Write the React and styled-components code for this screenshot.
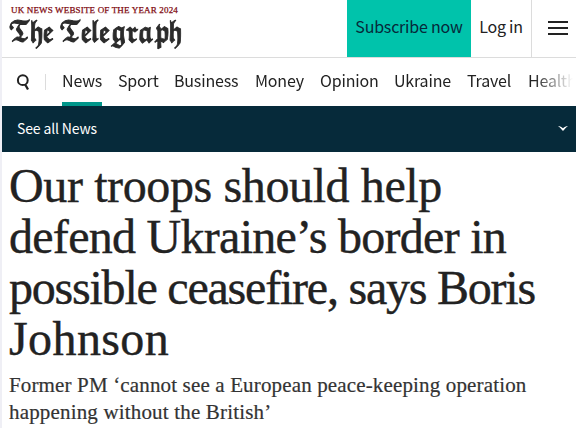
import React from 'react';
import styled, { createGlobalStyle } from 'styled-components';

const sans = '"Noto Sans CJK SC", "Noto Sans", sans-serif';
const serif = '"Liberation Serif", "Times New Roman", serif';

const GlobalStyle = createGlobalStyle`
  * { box-sizing: border-box; }
  body { margin: 0; background: #fff; overflow: hidden; }
`;

const Page = styled.div`
  height: 428px;
  overflow: hidden;
  border-left: 2px solid #efeff5;
  background: #fff;
  color: #222;
  font-family: ${sans};
`;

const Header = styled.header`
  display: flex;
  height: 58px;
  border-bottom: 1px solid #dcdcdc;
`;

const Brand = styled.div`
  flex: 1;
  padding: 5px 0 0 7px;
  min-width: 0;
`;

const Tagline = styled.p`
  margin: 0 0 0 2px;
  font: 9px/10px ${serif};
  letter-spacing: 0.16px;
  color: #7f0c12;
  -webkit-text-stroke: 0.25px #7f0c12;
  white-space: nowrap;
`;

const Wordmark = styled.div`
  width: 260px;
  height: 34px;
  margin: 2px 0 0 -1px;
  font: 28px/34px "DejaVu Math TeX Gyre", ${serif};
  letter-spacing: -2px;
  color: #2b2b2b;
  -webkit-text-stroke: 1px #2b2b2b;
  white-space: nowrap;
  transform: scaleX(0.805);
  transform-origin: 0 0;
`;

const HeaderLink = styled.a`
  display: flex;
  justify-content: center;
  width: ${(p) => p.$width}px;
  height: 57px;
  padding-top: 14px;
  font-size: 16px;
  line-height: 24px;
  letter-spacing: -0.2px;
  white-space: nowrap;
  color: ${(p) => (p.$filled ? '#06293a' : '#222')};
  background: ${(p) => (p.$filled ? '#00c3ab' : 'transparent')};
`;

const MenuButton = styled.button`
  display: flex;
  flex-direction: column;
  gap: 4px;
  width: 45px;
  height: 57px;
  padding: 21px 0 0 16px;
  border: 0;
  border-left: 1px solid #dcdcdc;
  background: none;
`;

const MenuBar = styled.span`
  width: 20px;
  height: 2px;
  background: #222;
`;

const Nav = styled.nav`
  display: flex;
  height: 48px;
  padding-left: 14px;
  overflow: hidden;
  mask-image: linear-gradient(to right, #000 calc(100% - 42px), transparent calc(100% - 3px));
`;

const SearchSlot = styled.div`
  flex: none;
  width: 30px;
  height: 16px;
  margin: 16px 16px 0 0;
  border-right: 1px solid #dcdcdc;
  svg { display: block; }
`;

const NavItem = styled.a`
  flex: none;
  width: ${(p) => p.$width}px;
  height: 48px;
  margin-right: 16px;
  padding-top: 10px;
  border-bottom: 4px solid ${(p) => (p.$active ? '#00968a' : 'transparent')};
  font-size: 16px;
  line-height: 24px;
  letter-spacing: -0.18px;
  white-space: nowrap;
`;

const SectionBar = styled.div`
  display: flex;
  align-items: center;
  justify-content: space-between;
  height: 46px;
  padding: 0 8px 2px 15px;
  background: #062a3a;
  color: #fff;
  font-size: 14px;
  letter-spacing: -0.14px;
`;

const Article = styled.article`
  padding: 8px 0 0 7px;
  font-family: ${serif};
`;

const Headline = styled.h1`
  margin: 0;
  font-size: 48px;
  line-height: 51px;
  font-weight: 400;
  -webkit-text-stroke: 0.4px #222;
`;

const Standfirst = styled.p`
  margin: 8px 0 0;
  font-size: 21px;
  line-height: 27px;
  color: #333;
  -webkit-text-stroke: 0.2px #333;
`;

const Line = styled.span`
  display: block;
  white-space: nowrap;
  letter-spacing: ${(p) => p.$track}px;
`;

const navItems = [
  ['News', 40], ['Sport', 40], ['Business', 65], ['Money', 49],
  ['Opinion', 58], ['Ukraine', 57], ['Travel', 45], ['Health', 49],
];

const headline = [
  ['Our troops should help', -0.38],
  ['defend Ukraine’s border in', -0.72],
  ['possible ceasefire, says Boris', -1.22],
  ['Johnson', 0.4],
];

export default function App() {
  return (
    <Page>
      <GlobalStyle />
      <Header>
        <Brand>
          <Tagline>UK NEWS WEBSITE OF THE YEAR 2024</Tagline>
          <Wordmark role="img" aria-label="The Telegraph">𝕿𝖍𝖊 𝕿𝖊𝖑𝖊𝖌𝖗𝖆𝖕𝖍</Wordmark>
        </Brand>
        <HeaderLink $width={124} $filled>Subscribe now</HeaderLink>
        <HeaderLink $width={60}>Log in</HeaderLink>
        <MenuButton aria-label="Menu"><MenuBar /><MenuBar /><MenuBar /></MenuButton>
      </Header>
      <Nav>
        <SearchSlot>
          <svg width="14" height="17" viewBox="0 0 14 17" fill="none" stroke="#222">
            <circle cx="6.8" cy="6.2" r="4.9" strokeWidth="2" />
            <path d="M9 10.2 12 15.5" strokeWidth="2.3" />
          </svg>
        </SearchSlot>
        {navItems.map(([name, width], i) => (
          <NavItem key={name} $width={width} $active={i === 0}>{name}</NavItem>
        ))}
      </Nav>
      <SectionBar>
        See all News
        <svg width="10" height="5" viewBox="0 0 10 5" fill="#fff">
          <path d="M0 0C2 0 3.8 1.4 5 2.3C6.2 1.4 8 0 10 0C8.3 1.3 6.5 3.2 5 5C3.5 3.2 1.7 1.3 0 0Z" />
        </svg>
      </SectionBar>
      <Article>
        <Headline>
          {headline.map(([text, track]) => <Line key={text} $track={track}>{text} </Line>)}
        </Headline>
        <Standfirst>
          <Line $track={0.15}>Former PM ‘cannot see a European peace-keeping operation </Line>
          <Line $track={0.17}>happening without the British’</Line>
        </Standfirst>
      </Article>
    </Page>
  );
}
